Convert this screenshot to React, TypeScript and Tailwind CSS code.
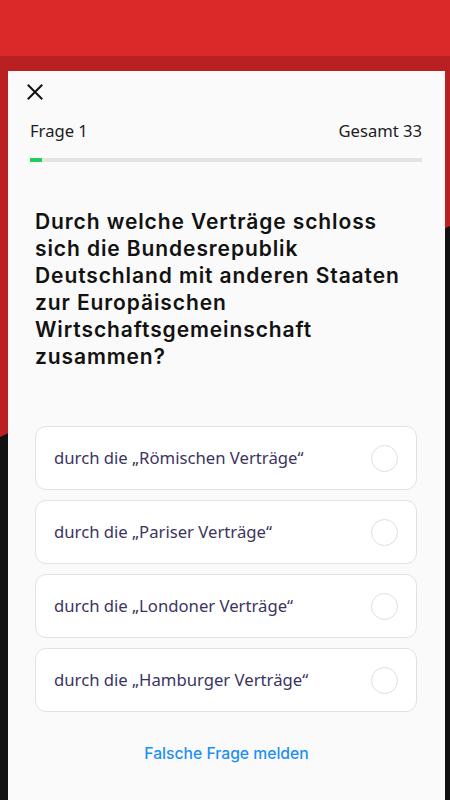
import React from "react";

const options = [
  "durch die „Römischen Verträge“",
  "durch die „Pariser Verträge“",
  "durch die „Londoner Verträge“",
  "durch die „Hamburger Verträge“",
];

export default function App() {
  return (
    <div className="relative h-[800px] w-[450px] overflow-hidden bg-[#121212]">
      <svg
        className="absolute inset-0"
        width="450"
        height="800"
        viewBox="0 0 450 800"
        aria-hidden="true"
      >
        <polygon points="0,56 450,56 450,226 0,437" fill="#b92022" />
        <rect x="0" y="0" width="450" height="56" fill="#db2829" />
      </svg>
      <div className="relative flex h-full flex-col">
        <div className="h-[71px] shrink-0" />
        <div className="ml-[8px] mr-[5px] flex flex-1 flex-col bg-[#fafafa] font-['Noto_Sans',sans-serif]">
          <div className="pl-[19px] pt-[13px]">
            <svg width="16" height="16" viewBox="0 0 16 16" aria-hidden="true">
              <path
                d="M1.5 1.5 L14.5 14.5 M14.5 1.5 L1.5 14.5"
                stroke="#111"
                strokeWidth="2"
                strokeLinecap="square"
              />
            </svg>
          </div>
          <div className="mt-[20px] flex items-center justify-between pl-[22px] pr-[23px] text-[16.6px] leading-[22px] text-[#1c1c1c]">
            <span>Frage 1</span>
            <span>Gesamt 33</span>
          </div>
          <div className="ml-[22px] mr-[23px] mt-[16px] h-[4px] bg-[#e1e4e1]">
            <div className="h-full w-[12px] bg-[#1fcf5a]" />
          </div>
          <h1 className="ml-[27px] mr-[20px] mt-[46px] font-['Inter',sans-serif] text-[21px] font-semibold leading-[27px] tracking-[0.9px] text-[#121212]">
            Durch welche Verträge schloss sich die Bundesrepublik Deutschland mit anderen Staaten zur Europäischen Wirtschaftsgemeinschaft zusammen?
          </h1>
          <div className="ml-[27px] mr-[28px] mt-[56px] flex flex-col gap-[10px]">
            {options.map((o) => (
              <div
                key={o}
                className="flex h-[64px] items-center justify-between rounded-[11px] border border-[#e2e2e6] bg-white pl-[18px] pr-[18px]"
              >
                <span className="text-[16.7px] text-[#3b3560]">{o}</span>
                <span className="h-[27px] w-[27px] rounded-full border-[1.5px] border-[#dedee2]" />
              </div>
            ))}
          </div>
          <div className="mt-[30px] text-center font-['Inter',sans-serif] text-[15.7px] font-medium text-[#1e90f0]">
            Falsche Frage melden
          </div>
        </div>
      </div>
    </div>
  );
}
